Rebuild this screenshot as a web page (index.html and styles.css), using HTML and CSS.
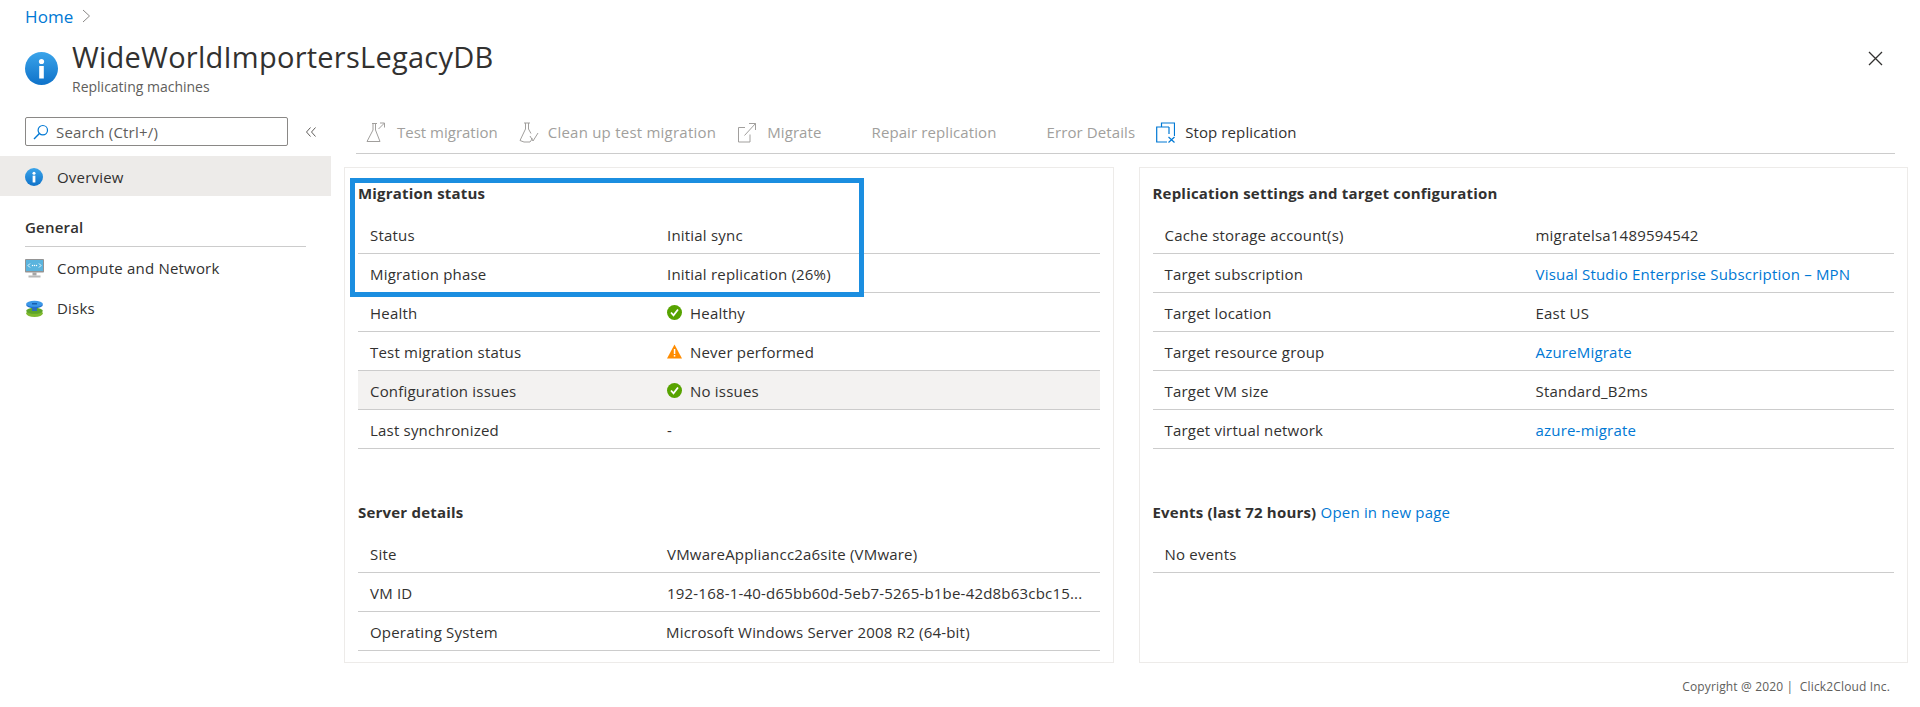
FILE: index.html
```html
<!DOCTYPE html>
<html lang="en">

<head>
    <meta charset="UTF-8">
    <meta name="viewport" content="width=device-width, initial-scale=1.0">
    <title>WideWorldImportersLegacyDB</title>
    <link rel="stylesheet" href="styles.css">
</head>

<body>
    <nav class="breadcrumb">
        <a href="#">Home</a>
        <svg class="crumb-arrow" width="9" height="14" viewBox="0 0 9 14"><path d="M1 1l6.5 6L1 13" fill="none" stroke="#8a8886" stroke-width="1"/></svg>
    </nav>

    <header class="page-header">
        <svg class="header-icon" width="33" height="33" viewBox="0 0 33 33">
            <defs>
                <linearGradient id="infoGrad" x1="0" y1="0" x2="0" y2="1">
                    <stop offset="0" stop-color="#3ba4ea"/>
                    <stop offset="1" stop-color="#0f72c9"/>
                </linearGradient>
            </defs>
            <circle cx="16.5" cy="16.5" r="16.5" fill="url(#infoGrad)"/>
            <circle cx="16.5" cy="9.5" r="2.6" fill="#fff"/>
            <rect x="14.2" y="14" width="4.6" height="12.5" fill="#fff"/>
        </svg>
        <div class="header-text">
            <h1>WideWorldImportersLegacyDB</h1>
            <p>Replicating machines</p>
        </div>
        <svg class="close-icon" width="15" height="15" viewBox="0 0 15 15"><path d="M1 1l13 13M14 1L1 14" stroke="#323130" stroke-width="1.3"/></svg>
    </header>

    <div class="layout">
        <aside class="sidebar">
            <div class="search-row">
                <div class="search-box">
                    <svg width="16" height="16" viewBox="0 0 16 16"><circle cx="9.8" cy="6.2" r="4.7" fill="none" stroke="#0078d4" stroke-width="1.2"/><path d="M6.4 9.6L1 15" stroke="#0078d4" stroke-width="1.4"/></svg>
                    <span>Search (Ctrl+/)</span>
                </div>
                <svg class="collapse" width="10" height="10" viewBox="0 0 10 10"><path d="M4.5 0.5L0.5 5l4 4.5M9.5 0.5L5.5 5l4 4.5" fill="none" stroke="#605e5c" stroke-width="1"/></svg>
            </div>

            <div class="menu-item active">
                <svg width="18" height="18" viewBox="0 0 33 33">
                    <circle cx="16.5" cy="16.5" r="16.5" fill="url(#infoGrad)"/>
                    <circle cx="16.5" cy="9.5" r="2.8" fill="#fff"/>
                    <rect x="14" y="14" width="5" height="12.5" fill="#fff"/>
                </svg>
                <span>Overview</span>
            </div>

            <div class="menu-group">General</div>

            <div class="menu-item">
                <svg width="19" height="19" viewBox="0 0 19 19">
                    <rect x="0" y="0" width="19" height="13.5" rx="0.8" fill="#949494"/>
                    <rect x="1" y="1" width="17" height="11" fill="#5ab4de"/>
                    <path d="M5 4.5L3 6.5l2 2M14 4.5l2 2-2 2" fill="none" stroke="#fff" stroke-width="0.9"/>
                    <circle cx="7.5" cy="6.5" r="0.7" fill="#fff"/>
                    <circle cx="9.5" cy="6.5" r="0.7" fill="#fff"/>
                    <circle cx="11.5" cy="6.5" r="0.7" fill="#fff"/>
                    <rect x="7.5" y="13.5" width="4" height="3" fill="#a6a6a6"/>
                    <rect x="3.5" y="16.5" width="12" height="2" fill="#b8b8b8"/>
                </svg>
                <span>Compute and Network</span>
            </div>
            <div class="menu-item">
                <svg width="19" height="19" viewBox="0 0 19 19">
                    <ellipse cx="9.5" cy="14.2" rx="8.3" ry="3.8" fill="#7fb92f"/>
                    <ellipse cx="9.5" cy="11.8" rx="8.3" ry="3" fill="#5da52a"/>
                    <rect x="7" y="6" width="5" height="6" fill="#2f6eb5"/>
                    <ellipse cx="9.5" cy="6" rx="8.3" ry="3.2" fill="#1f6fd0"/>
                    <ellipse cx="9.5" cy="4.8" rx="8.3" ry="3" fill="#3c98e8"/>
                    <rect x="7" y="4.2" width="5" height="1.2" fill="#0f4f9e"/>
                </svg>
                <span>Disks</span>
            </div>
        </aside>

        <main class="content">
            <div class="toolbar">
                <div class="tool disabled test-tool">
                    <svg width="20" height="21" viewBox="0 0 20 21"><path d="M6 1.5h5M7 1.5v6.5L1 19.5h13L9.5 8V1.5M12.5 7L18.5 1M14 1h4.500v4.500" fill="none" stroke="#a19f9d" stroke-width="1"/></svg>
                    <span>Test migration</span>
                </div>
                <div class="tool disabled clean-tool">
                    <svg width="20" height="21" viewBox="0 0 20 21"><path d="M5 1h6M6.500 1v6L1 18.500l4 1.500h6l2.500-3.500M9.500 1v6l2.500 4.500M11 14l3 5 5-8" fill="none" stroke="#a19f9d" stroke-width="1"/></svg>
                    <span>Clean up test migration</span>
                </div>
                <div class="tool disabled migrate-tool">
                    <svg width="20" height="21" viewBox="0 0 20 21"><path d="M8 5.500H1.500V20H13v-7.500M7.500 13.500L18.500 1.500M12 1.500h6.500V8" fill="none" stroke="#a19f9d" stroke-width="1"/></svg>
                    <span>Migrate</span>
                </div>
                <div class="tool disabled no-icon"><span>Repair replication</span></div>
                <div class="tool disabled no-icon"><span>Error Details</span></div>
                <div class="tool stop-tool">
                    <svg width="19" height="21" viewBox="0 0 19 21"><path d="M5.500 5V1H18.500v13M13 5H0.700v15H11M13 5v7" fill="none" stroke="#0078d4" stroke-width="1.200"/><path d="M12.500 15l6 5.500M18.500 15l-6 5.500" stroke="#0078d4" stroke-width="1.200"/></svg>
                    <span>Stop replication</span>
                </div>
            </div>

            <div class="cards">
                <section class="card left-card">
                    <h2>Migration status</h2>
                    <div class="row"><div class="key">Status</div><div class="val">Initial sync</div></div>
                    <div class="row"><div class="key">Migration phase</div><div class="val">Initial replication (26%)</div></div>
                    <div class="row"><div class="key">Health</div><div class="val">
                        <svg class="status" width="15" height="15" viewBox="0 0 15 15"><circle cx="7.500" cy="7.500" r="7.500" fill="#57a300"/><path d="M4 7.500l2.500 2.800L11 4.500" fill="none" stroke="#fff" stroke-width="1.800"/></svg>Healthy</div></div>
                    <div class="row"><div class="key">Test migration status</div><div class="val">
                        <svg class="status" width="15" height="15" viewBox="0 0 15 15"><path d="M7.500 0.500L15 14.500H0z" fill="#ff8c00"/><rect x="6.800" y="5" width="1.500" height="5" fill="#fff"/><rect x="6.800" y="11" width="1.500" height="1.600" fill="#fff"/></svg>Never performed</div></div>
                    <div class="row hover"><div class="key">Configuration issues</div><div class="val">
                        <svg class="status" width="15" height="15" viewBox="0 0 15 15"><circle cx="7.500" cy="7.500" r="7.500" fill="#57a300"/><path d="M4 7.500l2.500 2.800L11 4.500" fill="none" stroke="#fff" stroke-width="1.800"/></svg>No issues</div></div>
                    <div class="row"><div class="key">Last synchronized</div><div class="val">-</div></div>

                    <h2 class="second">Server details</h2>
                    <div class="row"><div class="key">Site</div><div class="val">VMwareAppliancc2a6site (VMware)</div></div>
                    <div class="row"><div class="key">VM ID</div><div class="val">192-168-1-40-d65bb60d-5eb7-5265-b1be-42d8b63cbc15...</div></div>
                    <div class="row"><div class="key">Operating System</div><div class="val os-val">Microsoft Windows Server 2008 R2 (64-bit)</div></div>

                    <div class="highlight-box"></div>
                </section>

                <section class="card right-card">
                    <h2>Replication settings and target configuration</h2>
                    <div class="row"><div class="key">Cache storage account(s)</div><div class="val">migratelsa1489594542</div></div>
                    <div class="row"><div class="key">Target subscription</div><div class="val"><a href="#">Visual Studio Enterprise Subscription – MPN</a></div></div>
                    <div class="row"><div class="key">Target location</div><div class="val">East US</div></div>
                    <div class="row"><div class="key">Target resource group</div><div class="val"><a href="#">AzureMigrate</a></div></div>
                    <div class="row"><div class="key">Target VM size</div><div class="val">Standard_B2ms</div></div>
                    <div class="row"><div class="key">Target virtual network</div><div class="val"><a href="#">azure-migrate</a></div></div>

                    <h2 class="second">Events (last 72 hours) <a href="#">Open in new page</a></h2>
                    <div class="row"><div class="key">No events</div></div>
                </section>
            </div>

            <footer class="copyright">Copyright @ 2020 | &nbsp;Click2Cloud Inc.</footer>
        </main>
    </div>
</body>

</html>
```

FILE: styles.css
```css
html,
body {
    height: 100%;
}

body {
    margin: 0;
    padding: 0;
    background-color: #fff;
    color: #323130;
    font-family: "Open Sans", "Noto Sans", sans-serif;
    font-size: 15px;
    letter-spacing: 0.2px;
    overflow: hidden;
}

a {
    color: #0078d4;
    text-decoration: none;
}

.breadcrumb {
    display: flex;
    align-items: center;
    gap: 9px;
    height: 32px;
    padding: 0 0 2px 25px;
    font-size: 17px;
    letter-spacing: 0.1px;
}

.page-header {
    display: flex;
    align-items: flex-start;
    height: 83px;
    padding: 0 33px 0 25px;
}

.header-icon {
    margin: 18px 14px 0 0;
}

.header-text {
    flex: 1;
    padding-top: 4px;
}

.close-icon {
    margin: 17px 4px 0 0;
}

.page-header h1 {
    margin: 0 0 3px;
    font-size: 29px;
    font-weight: 400;
    line-height: 38px;
    letter-spacing: 0.25px;
}

.page-header p {
    margin: 0;
    font-size: 14px;
    line-height: 16px;
    letter-spacing: 0;
    color: #605e5c;
}

.layout {
    display: flex;
}

.sidebar {
    width: 331px;
    flex-shrink: 0;
}

.search-row {
    display: flex;
    align-items: center;
    padding-left: 25px;
    margin-bottom: 10px;
}

.search-box {
    display: flex;
    align-items: center;
    gap: 7px;
    width: 263px;
    height: 29px;
    padding-left: 7px;
    box-sizing: border-box;
    border: 1px solid #8a8886;
    border-radius: 2px;
    color: #605e5c;
}

.collapse {
    margin-left: 18px;
}

.menu-item {
    display: flex;
    align-items: center;
    gap: 13px;
    height: 40px;
    padding-left: 25px;
}

.menu-item.active {
    gap: 14px;
    box-sizing: border-box;
    padding-top: 1px;
    background-color: #edebe9;
}

.menu-group {
    margin: 18px 25px 1px;
    padding: 4px 0 9px;
    line-height: 19px;
    width: 281px;
    font-weight: 600;
    border-bottom: 1px solid #ccc;
}

.menu-item svg {
    flex-shrink: 0;
}

.content {
    flex: 1;
    padding: 0 12px 0 13px;
}

.toolbar {
    display: flex;
    align-items: center;
    height: 36px;
    margin: 0 13px 13px 12px;
    padding-left: 10px;
    gap: 21px;
    letter-spacing: 0.1px;
    border-bottom: 1px solid #ccc;
}

.tool {
    display: flex;
    align-items: center;
    gap: 11px;
    margin-top: -6px;
}

.tool.disabled {
    color: #a19f9d;
}

.tool.no-icon {
    padding-left: 29px;
}

.test-tool {
    letter-spacing: 0;
}

.clean-tool {
    gap: 9px;
    letter-spacing: 0.23px;
}

.migrate-tool,
.stop-tool {
    gap: 10px;
}

.cards {
    display: flex;
    gap: 25px;
    height: 496px;
}

.card {
    flex: 1;
    position: relative;
    padding: 4px 13px 0;
    border: 1px solid #edebe9;
}

.card h2 {
    margin: 0;
    padding-bottom: 1px;
    font-size: 15px;
    font-weight: 700;
    line-height: 42px;
}

.card h2 a {
    font-weight: 400;
}

.card h2.second {
    margin-top: 42px;
}

.row {
    display: flex;
    align-items: center;
    height: 39px;
    box-sizing: border-box;
    padding: 2px 0 0 12px;
    border-bottom: 1px solid #ccc;
}

.row.hover {
    background-color: #f3f2f1;
}

.left-card .key {
    width: 297px;
}

.right-card .key {
    width: 371px;
}

.val {
    display: flex;
    align-items: center;
    min-width: 0;
    white-space: nowrap;
}

.os-val {
    margin-left: -1px;
}

.status {
    margin: -2px 8px 0 0;
}

.highlight-box {
    position: absolute;
    top: 10px;
    left: 5px;
    width: 504px;
    height: 109px;
    border: 5px solid #1b8ee0;
}

.copyright {
    padding: 15px 18px 0 0;
    font-size: 12px;
    line-height: 18px;
    letter-spacing: 0.15px;
    text-align: right;
    color: #605e5c;
}
```
